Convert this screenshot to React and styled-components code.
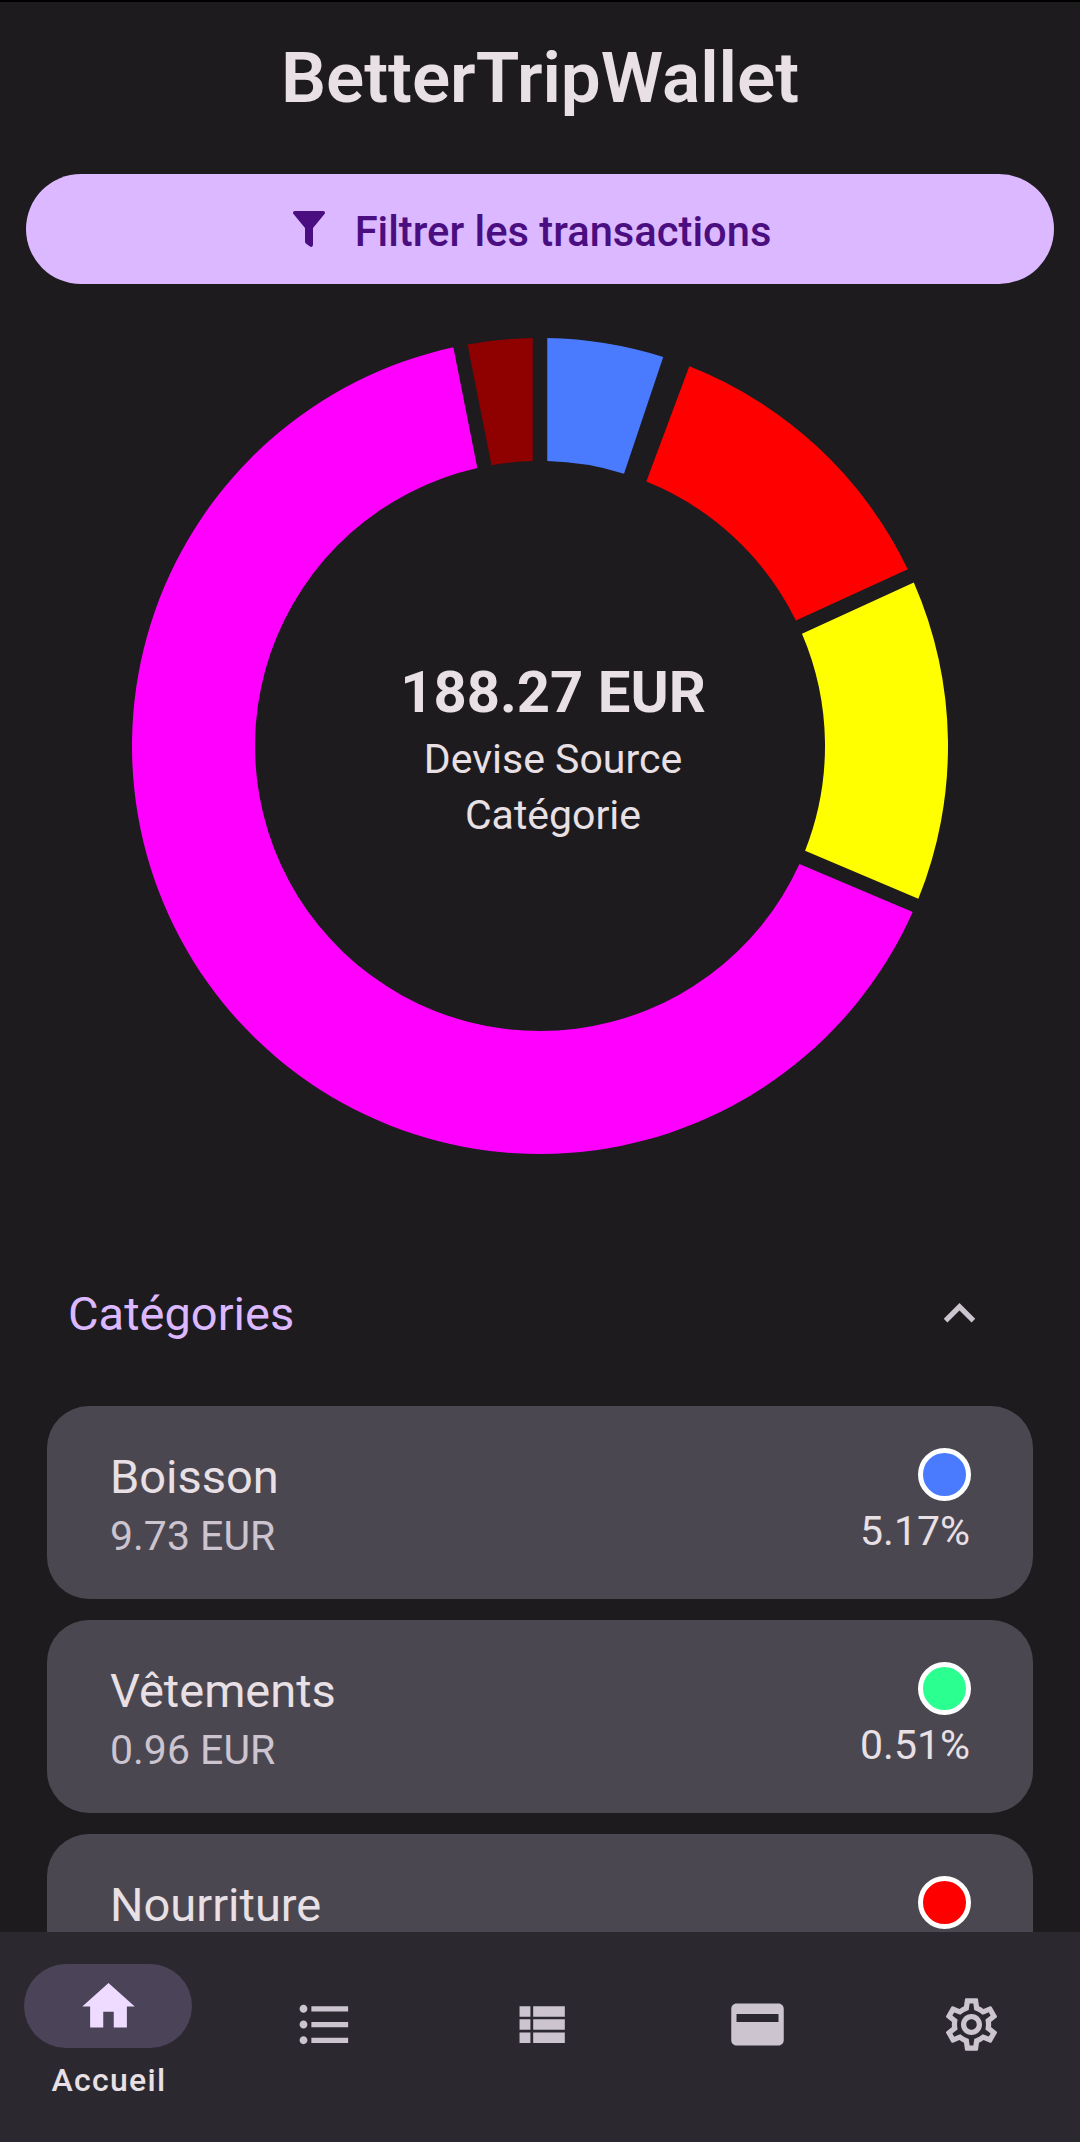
import React from "react";
import styled, { createGlobalStyle } from "styled-components";
import { MdOutlineSettings, MdKeyboardArrowUp, MdHome, MdFormatListBulleted } from "react-icons/md";

const Global = createGlobalStyle`
  html, body { margin: 0; padding: 0; background: #1d1b1e; }
  * { box-sizing: border-box; }
`;

const Screen = styled.div`
  width: 1080px; height: 2142px; display: flex; flex-direction: column;
  background: #1d1b1e; color: #e8e0e5; font-family: Roboto, "Noto Sans", sans-serif;
  border-top: 2px solid #000; overflow: hidden;
`;
const Content = styled.main`flex: 1; min-height: 0; overflow: hidden; display: flex; flex-direction: column;`;
const Title = styled.h1`
  flex: none; margin: 38px 0 0; height: 76px; text-align: center; font-size: 71px; line-height: 76px; font-weight: 600;
  color: #e8e0e5;
`;
const FilterButton = styled.button`
  flex: none; margin: 58px 26px 0; height: 110px; border: 0; border-radius: 55px; background: #dbb8ff; color: #4a0e80;
  display: flex; align-items: center; justify-content: center; gap: 30px; padding: 0 16px 0 0;
  font: 500 41.7px/1 Roboto, sans-serif;
`;
const FilterLabel = styled.span`padding-top: 5px;`;
const ChartSvg = styled.svg`display: block; width: 1080px; height: 900px; margin-top: 5px; flex: none;`;
const ChartTotal = styled.text`font: 700 58px Roboto, sans-serif; fill: #e8e0e5; text-anchor: middle;`;
const ChartLabel = styled.text`font: 400 41px Roboto, sans-serif; fill: #e8e0e5; text-anchor: middle;`;

const SectionHeader = styled.div`
  display: flex; align-items: center; justify-content: space-between; margin-top: 68px; padding: 0 89px 0 68px;
  height: 112px; flex: none;
`;
const SectionTitle = styled.span`font-size: 47px; color: #dbb8ff;`;
const Chevron = styled(MdKeyboardArrowUp)`color: #ccc4cf;`;
const List = styled.div`display: flex; flex-direction: column; gap: 21px; padding: 0 47px; margin-top: 37px;`;
const Card = styled.article`
  flex: none; height: 193px; border-radius: 42px; background: #4b4750; padding: 41px 63px 0;
  display: flex; justify-content: space-between; align-items: flex-start;
`;
const CardLeft = styled.div`display: flex; flex-direction: column;`;
const CardName = styled.span`font-size: 47px; line-height: 60px; color: #e8e0e5;`;
const CardAmount = styled.span`font-size: 41px; line-height: 58px; color: #ccc4cf;`;
const CardRight = styled.div`display: flex; flex-direction: column; align-items: flex-end;`;
const Dot = styled.span`
  width: 53px; height: 53px; border-radius: 50%; border: 5px solid #fff; background: ${p => p.$color};
  margin: 1px -1px 5px 0;
`;
const Percent = styled.span`font-size: 41px; line-height: 50px; color: #e8e0e5;`;

const Nav = styled.nav`
  flex: none; height: 210px; background: #2b292f; display: grid; grid-template-columns: 216px 216px 220px 211px 217px;
  padding-top: 32px;
`;
const NavItem = styled.div`display: flex; flex-direction: column; align-items: center; padding-top: ${p => (p.$active ? 0 : "18px")};`;
const Pill = styled.div`
  width: 168px; height: 84px; border-radius: 42px; display: flex; align-items: center; justify-content: center;
  background: ${p => (p.$active ? "#4b4358" : "transparent")};
  color: ${p => (p.$active ? "#eedbff" : "#ccc4cf")};
`;
const NavLabel = styled.span`margin-top: 12px; padding-left: 2px; font-size: 32px; line-height: 40px; font-weight: 500; letter-spacing: 1.3px; color: #e8e0e5;`;

const cx = 540, cy = 745, R = 408, r = 285, gap = 14.5;
const pt = (rad, deg) => {
  const a = (deg * Math.PI) / 180;
  return `${(cx + rad * Math.sin(a)).toFixed(2)} ${(cy - rad * Math.cos(a)).toFixed(2)}`;
};
const slice = (a0, a1) => {
  const off = rad => (Math.asin(gap / 2 / rad) * 180) / Math.PI;
  const oa = a0 + off(R), ob = a1 - off(R), ia = a0 + off(r), ib = a1 - off(r);
  const large = ob - oa > 180 ? 1 : 0;
  return `M${pt(R, oa)} A${R} ${R} 0 ${large} 1 ${pt(R, ob)} L${pt(r, ib)} A${r} ${r} 0 ${large} 0 ${pt(r, ia)} Z`;
};
const slices = [
  ["#4a7bff", 0, 18.6],
  ["#ff0000", 20.45, 65.35],
  ["#ffff00", 65.35, 113],
  ["#ff00ff", 113, 348.75],
  ["#8f0000", 348.75, 360],
];

const Chart = () => (
  <ChartSvg viewBox="0 288 1080 900">
    {slices.map(([c, a, b]) => <path key={c} d={slice(a, b)} fill={c} />)}
    <ChartTotal x="553" y="711">188.27 EUR</ChartTotal>
    <ChartLabel x="553" y="772">Devise Source</ChartLabel>
    <ChartLabel x="553" y="828">Catégorie</ChartLabel>
  </ChartSvg>
);

const FunnelIcon = () => (
  <svg width="32" height="36" viewBox="0 0 32 36" fill="currentColor">
    <path d="M2 0H30C32 0 32.500 1.800 31.500 3L20 17V33.500C20 35.500 18.500 36.500 17 35.500L13.500 33C12.500 32.300 12 31.500 12 30.500V17L.5 3C-.5 1.800 0 0 2 0Z" />
  </svg>
);
const CardIcon = () => (
  <svg width="63" height="63" viewBox="0 0 24 24" fill="currentColor" fillRule="evenodd">
    <path d="M20 4H4c-1.110 0-1.990.890-1.990 2L2 18c0 1.110.890 2 2 2h16c1.110 0 2-.890 2-2V6c0-1.110-.890-2-2-2zM4 8h16v3H4z" />
  </svg>
);
const RowsIcon = () => (
  <svg width="63" height="63" viewBox="0 0 24 24" fill="currentColor">
    <path d="M3.250 5H7.400V9H3.250zM8.450 5H20.500V9H8.450zM3.250 10H7.400V14H3.250zM8.450 10H20.500V14H8.450zM3.250 15H7.400V19H3.250zM8.450 15H20.500V19H8.450z" />
  </svg>
);

const cats = [
  ["Boisson", "9.73 EUR", "5.17%", "#4a7bff"],
  ["Vêtements", "0.96 EUR", "0.51%", "#2bff8f"],
  ["Nourriture", "", "", "#ff0000"],
];

export default function App() {
  return (
    <Screen>
      <Global />
      <Content>
        <Title>BetterTripWallet</Title>
        <FilterButton><FunnelIcon /><FilterLabel>Filtrer les transactions</FilterLabel></FilterButton>
        <Chart />
        <SectionHeader>
          <SectionTitle>Catégories</SectionTitle>
          <Chevron size={63} />
        </SectionHeader>
        <List>
          {cats.map(([n, a, p, c]) => (
            <Card key={n}>
              <CardLeft><CardName>{n}</CardName><CardAmount>{a}</CardAmount></CardLeft>
              <CardRight><Dot $color={c} /><Percent>{p}</Percent></CardRight>
            </Card>
          ))}
        </List>
      </Content>
      <Nav>
        <NavItem $active><Pill $active><MdHome size={63} /></Pill><NavLabel>Accueil</NavLabel></NavItem>
        <NavItem><Pill><MdFormatListBulleted size={63} /></Pill></NavItem>
        <NavItem><Pill><RowsIcon /></Pill></NavItem>
        <NavItem><Pill><CardIcon /></Pill></NavItem>
        <NavItem><Pill><MdOutlineSettings size={63} /></Pill></NavItem>
      </Nav>
    </Screen>
  );
}
